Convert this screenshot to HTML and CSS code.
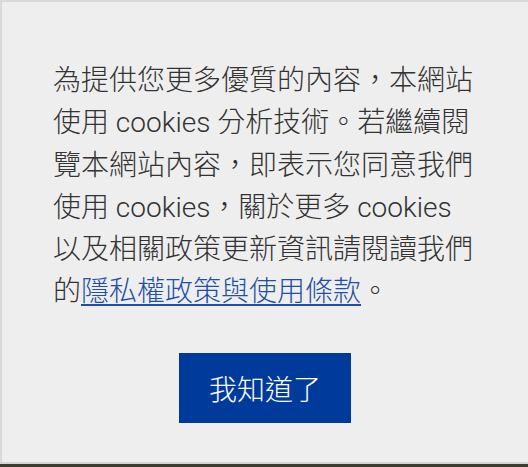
FILE: index.html
```html
<!DOCTYPE html>
<html lang="zh-Hant">
<head>
<meta charset="utf-8">
<link rel="stylesheet" href="styles.css">
</head>
<body>
<div class="page">
  <div class="panel">
    <p class="msg">為提供您更多優質的內容，本網站使用 cookies 分析技術。若繼續閱覽本網站內容，即表示您同意我們使用 cookies，關於更多 cookies 以及相關政策更新資訊請閱讀我們的<a class="link" href="#">隱私權政策與使用條款</a>。</p>
    <div class="actions">
      <button class="btn" type="button">我知道了</button>
    </div>
  </div>
  <div class="strip"></div>
</div>
</body>
</html>
```
FILE: styles.css
```css
html, body {
  margin: 0;
  padding: 0;
  height: 100%;
}
body {
  background: #eeeeee;
  font-family: Roboto, "Noto Sans CJK TC", sans-serif;
}
.page {
  display: flex;
  flex-direction: column;
  height: 467px;
}
.panel {
  flex: 1;
  box-sizing: border-box;
  border-top: 2px solid #d8d8d8;
  border-left: 2px solid #d8d8d8;
  border-bottom: 2px solid #d4d4d4;
  padding: 58px 53px 0 51px;
  display: flex;
  flex-direction: column;
}
.msg {
  margin: 0;
  font-size: 28px;
  line-height: 42.3px;
  color: #333333;
  font-weight: 300;
  width: 422px;
  word-break: break-all;
}
.link {
  color: #1f4fa6;
  text-decoration: underline;
  text-underline-offset: 3px;
}
.actions {
  display: flex;
  justify-content: center;
  margin-top: 39px;
  padding-left: 2px;
}
.btn {
  background: #003b9c;
  color: #ffffff;
  border: none;
  border-radius: 0;
  font-family: "Noto Sans CJK TC", sans-serif;
  font-size: 28px;
  font-weight: 300;
  width: 172px;
  height: 70px;
  padding: 0;
  cursor: pointer;
}
.strip {
  height: 3px;
  background: #3d3c30;
}
```
